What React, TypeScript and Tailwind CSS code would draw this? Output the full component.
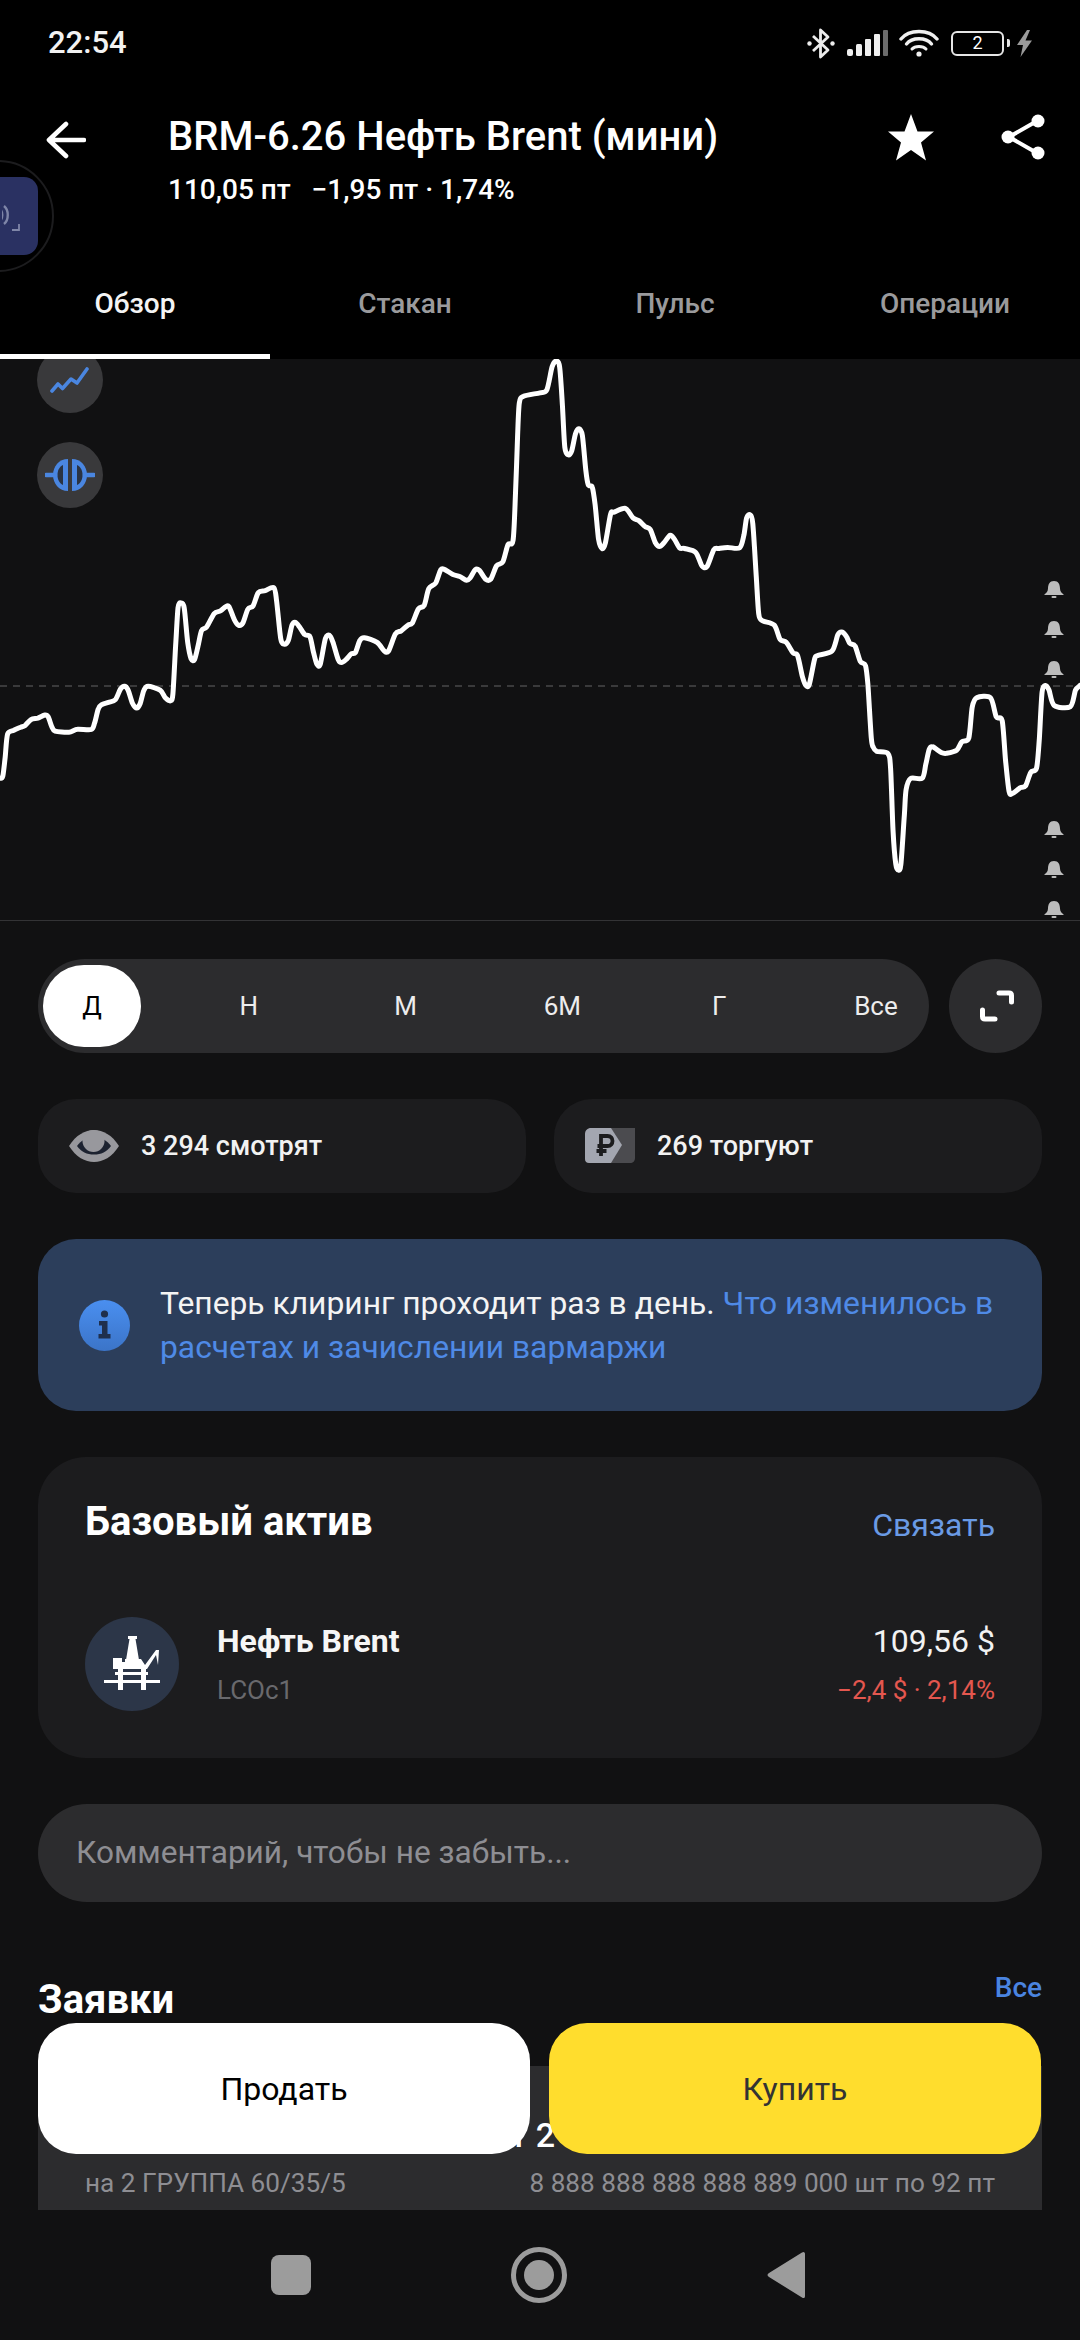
import React from "react";

const LEFT = [[0,1145],[8,1140],[15,1090],[22,1030],[40,1020],[60,1012],[72,1008],[90,992],[110,988],[130,980],[140,985],[150,1010],[160,1022],[200,1025],[225,1017],[265,1018],[275,1000],[285,965],[295,953],[315,947],[335,940],[350,912],[362,905],[372,915],[385,950],[397,962],[407,950],[418,915],[430,905],[465,915],[480,935],[495,943],[502,925],[510,800],[517,700],[526,687],[535,700],[545,790],[555,833],[565,835],[575,800],[585,760],[600,750],[622,715],[640,708],[655,697],[665,697],[680,730],[692,745],[705,740],[720,703],[735,695],[750,660],[770,655],[795,647],[803,680],[815,780],[825,795],[837,785],[848,745],[858,738],[870,750],[885,770],[900,775],[910,815],[920,847],[930,847],[945,780],[957,772],[967,790],[982,835],[992,843],[1005,835],[1020,820],[1032,817],[1045,785],[1058,778],[1095,790],[1115,812],[1128,813],[1148,768],[1165,760],[1185,745],[1197,740],[1215,703],[1232,693],[1245,650],[1265,635],[1280,600],[1292,600],[1315,613],[1335,618],[1355,628],[1365,622],[1380,600],[1392,602],[1410,625],[1425,625],[1442,590],[1460,580],[1475,535],[1490,523],[1497,400],[1503,250],[1508,165],[1520,147]];
const RIGHT = [[0,138],[20,130],[35,70],[47,55],[57,70],[65,170],[72,280],[82,300],[92,290],[103,245],[113,232],[123,250],[133,340],[140,378],[152,385],[160,430],[170,520],[180,545],[190,530],[205,455],[215,450],[248,440],[270,465],[287,472],[305,487],[320,495],[335,530],[347,540],[360,530],[378,510],[390,520],[405,543],[420,545],[452,555],[470,590],[485,592],[505,548],[520,545],[545,542],[580,543],[592,510],[600,465],[610,457],[618,480],[628,620],[635,715],[645,733],[680,745],[697,782],[715,790],[735,818],[748,825],[762,880],[772,903],[782,900],[797,835],[805,825],[848,813],[865,770],[877,763],[890,775],[900,793],[915,800],[930,840],[945,850],[952,900],[962,1040],[968,1065],[978,1075],[1010,1080],[1018,1120],[1025,1280],[1033,1370],[1040,1385],[1048,1370],[1058,1240],[1063,1175],[1076,1146],[1110,1145],[1120,1110],[1130,1070],[1140,1063],[1165,1078],[1180,1080],[1210,1072],[1225,1050],[1245,1040],[1255,960],[1268,935],[1308,935],[1325,985],[1342,995],[1352,1100],[1362,1180],[1372,1185],[1395,1170],[1410,1165],[1425,1130],[1442,1118],[1450,1040],[1458,920],[1468,903],[1478,915],[1493,955],[1540,958],[1555,915],[1568,903]];

function chartPath() {
  const pts = [
    ...LEFT.map(([x, y]) => [(x * 540) / 1568, 340 + (y * 600) / 1568]),
    ...RIGHT.map(([x, y]) => [540 + (x * 540) / 1568, 340 + (y * 600) / 1568]),
  ];
  let d = `M${pts[0][0].toFixed(1)} ${pts[0][1].toFixed(1)}`;
  const t = 0.14;
  for (let i = 0; i < pts.length - 1; i++) {
    const p0 = pts[Math.max(0, i - 1)];
    const p1 = pts[i];
    const p2 = pts[i + 1];
    const p3 = pts[Math.min(pts.length - 1, i + 2)];
    d += ` C${(p1[0] + (p2[0] - p0[0]) * t).toFixed(1)} ${(p1[1] + (p2[1] - p0[1]) * t).toFixed(1)} ${(p2[0] - (p3[0] - p1[0]) * t).toFixed(1)} ${(p2[1] - (p3[1] - p1[1]) * t).toFixed(1)} ${p2[0].toFixed(1)} ${p2[1].toFixed(1)}`;
  }
  return d;
}

const BELLS = [581, 621, 661, 821, 861, 901];

function Chart() {
  return (
    <div className="relative h-[562px] overflow-hidden border-b border-[#333335] bg-[#111112]">
      <svg className="absolute left-0 top-0" width="1080" height="561" viewBox="0 359 1080 561">
        <line x1="0" y1="686" x2="1080" y2="686" stroke="#48484a" strokeWidth="1.5" strokeDasharray="7 6" />
        <path d={chartPath()} fill="none" stroke="#ffffff" strokeWidth="5" strokeLinejoin="round" strokeLinecap="round" />
        {BELLS.map((y) => (
          <g key={y} transform={`translate(1044.5 ${y})`} fill="#bdbdbd">
            <path d="M9.5 0C5 0 3.6 3.5 3.5 7.5C3.4 10.5 2 12 0 13.3V14H19V13.3C17 12 15.6 10.5 15.5 7.5C15.4 3.5 14 0 9.5 0Z" />
            <rect x="7" y="15" width="5" height="2" rx="1" />
          </g>
        ))}
      </svg>
      <div className="absolute left-[37px] top-[-12px] flex h-[66px] w-[66px] items-center justify-center rounded-full bg-[#39393b]">
        <svg width="40" height="28" viewBox="0 0 40 28" fill="none" stroke="#4a86e0" strokeWidth="3.6" strokeLinecap="round" strokeLinejoin="round">
          <path d="M2 25L8 18L12.5 22.5L21 13L27 17L37 3" />
        </svg>
      </div>
      <div className="absolute left-[37px] top-[83px] flex h-[66px] w-[66px] items-center justify-center rounded-full bg-[#39393b]">
        <svg width="50" height="34" viewBox="0 0 50 34">
          <path d="M23 1V33C14 33 8 25.500 8 17C8 8.500 14 1 23 1Z" fill="#4a86e0" />
          <path d="M27 1V33C36 33 42 25.500 42 17C42 8.500 36 1 27 1Z" fill="#4a86e0" />
          <path d="M18 7V27C14 25 12.500 21 12.500 17C12.500 13 14 9 18 7Z" fill="#2a3342" />
          <path d="M32 7V27C36 25 37.500 21 37.500 17C37.500 13 36 9 32 7Z" fill="#2a3342" />
          <path d="M1 17H10M40 17H49" stroke="#4a86e0" strokeWidth="4.5" strokeLinecap="round" />
        </svg>
      </div>
    </div>
  );
}

function StatusIcons() {
  return (
    <div className="flex items-center text-white">
      <svg className="mr-[11px]" width="30" height="33" viewBox="0 0 30 33" fill="none" stroke="#ececec" strokeWidth="2.8">
        <path d="M7 9L22 23L14.5 30V3L22 10L7 24" strokeLinejoin="round" />
        <circle cx="3.5" cy="16.5" r="2.2" fill="#ececec" stroke="none" />
        <circle cx="26.5" cy="16.5" r="2.2" fill="#ececec" stroke="none" />
      </svg>
      <svg className="mr-[10px]" width="42" height="26" viewBox="0 0 42 26">
        <rect x="0" y="19" width="6" height="7" rx="2" fill="#efefef" />
        <rect x="9" y="14" width="6" height="12" rx="1.5" fill="#efefef" />
        <rect x="18" y="9" width="6" height="17" rx="1" fill="#efefef" />
        <rect x="27" y="4" width="6" height="22" rx="1" fill="#efefef" />
        <rect x="36" y="0" width="5" height="26" rx="1" fill="#6b6b6b" />
      </svg>
      <svg className="mr-[12px]" width="40" height="28" viewBox="0 0 40 28" fill="none" stroke="#f0f0f0" strokeWidth="3.4" strokeLinecap="round">
        <path d="M2 10C10 0 30 0 38 10" />
        <path d="M7.5 15C13 8 27 8 32.5 15" />
        <path d="M13 20C16 16.5 24 16.5 27 20" strokeWidth="3" />
        <circle cx="20" cy="25" r="2.6" fill="#f0f0f0" stroke="none" />
      </svg>
      <div className="flex h-[25px] w-[53px] items-center justify-center rounded-[6px] border-[2px] border-[#e6e6e6] text-[18px] leading-none">2</div>
      <div className="ml-[3px] mr-[7px] h-[8px] w-[3px] rounded-r-[2px] bg-[#e6e6e6]" />
      <svg width="15" height="27" viewBox="0 0 15 27">
        <path d="M10 0L0 15H6L3.5 27L15 10.5H8.5L13 0Z" fill="#9a9a9a" />
      </svg>
    </div>
  );
}

function Header() {
  return (
    <div className="relative bg-black text-white">
      <div className="flex h-[86px] items-center justify-between pl-[48px] pr-[48px]">
        <span className="text-[31px] font-medium text-[#f2f2f2]">22:54</span>
        <StatusIcons />
      </div>
      <div className="flex h-[168px] pt-[26px]">
        <div className="w-[168px] shrink-0 pl-[46px] pt-[9px]">
          <svg width="40" height="38" viewBox="0 0 40 38" fill="none" stroke="#fff" strokeWidth="4.6" strokeLinecap="round" strokeLinejoin="round">
            <path d="M20 3L3 19L20 35M3 19H38" />
          </svg>
        </div>
        <div className="flex-1">
          <div className="text-[40px] font-medium leading-[50px]">BRM-6.26 Нефть Brent (мини)</div>
          <div className="mt-[13px] whitespace-pre text-[28px] font-medium leading-[30px]">110,05 пт   −1,95 пт · 1,74%</div>
        </div>
        <div className="flex items-start pr-[35px] pt-[2px]">
          <svg className="mr-[67px]" width="46" height="47" viewBox="0 0 46 47">
            <path d="M23 0L29.5 17.5H46L33 28.5L38 46.5L23 36L8 46.5L13 28.5L0 17.5H16.5Z" fill="#fff" />
          </svg>
          <svg width="44" height="46" viewBox="0 0 44 46" fill="#fff" stroke="#fff" strokeWidth="4">
            <path d="M36 7L8 23L36 39" fill="none" />
            <circle cx="37" cy="7" r="6.5" stroke="none" />
            <circle cx="7" cy="23" r="6.5" stroke="none" />
            <circle cx="37" cy="39" r="6.5" stroke="none" />
          </svg>
        </div>
      </div>
      <div className="grid h-[105px] grid-cols-4 text-[28px] font-medium">
        {["Обзор", "Стакан", "Пульс", "Операции"].map((t, i) => (
          <div
            key={t}
            className={
              i === 0
                ? "flex items-center justify-center border-b-[5px] border-white text-[#f4f4f4]"
                : "flex items-center justify-center border-b-[5px] border-black text-[#9a9a9c]"
            }
          >
            {t}
          </div>
        ))}
      </div>
      <div className="absolute left-[-58px] top-[160px] h-[112px] w-[112px] rounded-full border-[2px] border-[#1c1c1e]" />
      <div className="absolute left-[-20px] top-[177px] flex h-[78px] w-[58px] items-center justify-end rounded-[14px] bg-[#2a3162] pr-[16px]">
        <svg width="20" height="40" viewBox="0 0 20 40" fill="none" stroke="#7f86a8" strokeWidth="2.4">
          <path d="M2 10C7 14 7 24 2 28" />
          <path d="M-2 13C1 16 1 22 -2 25" />
          <path d="M10 34H17V28" strokeWidth="1.8" />
        </svg>
      </div>
    </div>
  );
}

function Periods() {
  return (
    <div className="flex h-[94px] gap-[20px]">
      <div className="flex flex-1 items-center justify-between rounded-[47px] bg-[#2c2c2e] pl-[5px] pr-[4px] text-[26px] text-[#ededed]">
        {["Д", "Н", "М", "6М", "Г", "Все"].map((t, i) => (
          <div
            key={t}
            className={
              i === 0
                ? "flex h-[82px] w-[98px] items-center justify-center rounded-[41px] bg-white text-black"
                : "flex h-[82px] w-[98px] items-center justify-center"
            }
          >
            {t}
          </div>
        ))}
      </div>
      <div className="flex h-[94px] w-[93px] items-center justify-center rounded-full bg-[#2c2c2e]">
        <svg className="ml-[2px]" width="36" height="34" viewBox="0 0 36 34" fill="none" stroke="#fff" strokeWidth="5" strokeLinecap="round" strokeLinejoin="round">
          <path d="M20 4H30C31.500 4 32.500 5 32.500 6.500V13" />
          <path d="M3.500 21V27.500C3.500 29 4.500 30 6 30H16" />
        </svg>
      </div>
    </div>
  );
}

function Stats() {
  return (
    <div className="mt-[46px] grid h-[94px] grid-cols-2 gap-[28px] text-[27px] font-medium text-[#f2f2f2]">
      <div className="flex items-center rounded-[38px] bg-[#1c1c1e] pl-[30px]">
        <svg className="mr-[21px]" width="52" height="34" viewBox="0 0 52 34">
          <path d="M1 17C8 6 17 1 26 1C35 1 44 6 51 17C44 28 35 33 26 33C17 33 8 28 1 17Z" fill="#98989d" />
          <path d="M9 17C13 11 19 8.500 26 8.500C33 8.500 39 11 43 17C39 23 33 25.500 26 25.500C19 25.500 13 23 9 17Z" fill="#1c2230" />
          <circle cx="25.500" cy="12" r="11" fill="#98989d" />
        </svg>
        <span>3 294 смотрят</span>
      </div>
      <div className="flex items-center rounded-[38px] bg-[#1c1c1e] pl-[31px]">
        <svg className="mr-[22px]" width="50" height="36" viewBox="0 0 50 36">
          <path d="M10 0H50V30C50 33 48 35 45 35H8Z" fill="#4b4b4f" />
          <path d="M6 0H26L37 17L26 35H4C1.500 35 0 33.500 0 31V6C0 2.500 2.500 0 6 0Z" fill="#a3a6b0" />
          <path d="M16 28V8H22.500C26 8 27.500 10.500 27.500 13C27.500 15.500 26 18 22.500 18H12.500M11.500 23H21.500" fill="none" stroke="#1c1c1e" strokeWidth="3.800" />
        </svg>
        <span>269 торгуют</span>
      </div>
    </div>
  );
}

function Banner() {
  return (
    <div className="mt-[46px] flex h-[172px] items-center rounded-[38px] bg-[#2c3e5b] pl-[41px]">
      <svg className="mr-[30px] shrink-0" width="51" height="51" viewBox="0 0 51 51">
        <defs>
          <linearGradient id="infoGrad" x1="0" y1="0" x2="0" y2="1">
            <stop offset="0" stopColor="#4a8ff0" />
            <stop offset="1" stopColor="#3b74c8" />
          </linearGradient>
        </defs>
        <circle cx="25.500" cy="25.500" r="25.500" fill="url(#infoGrad)" />
        <circle cx="25.500" cy="14" r="3.600" fill="#1f2f4c" />
        <path d="M20 21H28.500V34H31.500V38.500H19.500V34H23V25.500H20Z" fill="#1f2f4c" />
      </svg>
      <div className="text-[31.8px] leading-[44px] text-[#f4f4f4]">
        Теперь клиринг проходит раз в день. <span className="text-[#4f8ae6]">Что изменилось в расчетах и зачислении вармаржи</span>
      </div>
    </div>
  );
}

function Asset() {
  return (
    <div className="mt-[46px] h-[301px] rounded-[48px] bg-[#1c1c1e] px-[47px] pt-[43px]">
      <div className="flex h-[44px] items-start justify-between">
        <span className="text-[40px] font-bold leading-[44px] text-white">Базовый актив</span>
        <span className="mt-[5px] text-[32px] leading-[40px] text-[#6a9ae4]">Связать</span>
      </div>
      <div className="mt-[73px] flex items-center">
        <div className="flex h-[94px] w-[94px] shrink-0 items-center justify-center rounded-full bg-[#2c3648]">
          <svg width="94" height="94" viewBox="0 0 94 94" fill="#fff">
            <path d="M43 19H52V22H50.500L54 43H41L44.500 22H43Z" />
            <path d="M28 41H37V45H40V42H56L60 48L71 33L74 33L73 48L71 38L62 52H28Z" />
            <rect x="30" y="55" width="33" height="3" />
            <rect x="33" y="52" width="5" height="21" />
            <rect x="56" y="52" width="5" height="21" />
            <rect x="19" y="63" width="56" height="3" />
          </svg>
        </div>
        <div className="ml-[38px] flex-1">
          <div className="text-[32px] font-bold leading-[40px] text-[#f6f6f6]">Нефть Brent</div>
          <div className="mt-[12px] text-[26px] leading-[34px] text-[#69696d]">LCOc1</div>
        </div>
        <div className="text-right">
          <div className="text-[32px] leading-[40px] text-[#f2f2f2]">109,56 $</div>
          <div className="mt-[12px] text-[26px] leading-[34px] text-[#e4574f]">−2,4 $ · 2,14%</div>
        </div>
      </div>
    </div>
  );
}

function Orders() {
  return (
    <>
      <div className="mt-[68px] flex h-[96px] items-start justify-between">
        <span className="mt-[8px] text-[40px] font-bold leading-[44px] text-white">Заявки</span>
        <span className="text-[28px] font-medium leading-[36px] text-[#4a84e0]">Все</span>
      </div>
      <div className="h-[144px] bg-[#2c2c2e] pt-[49px]">
        <div className="w-[517px] text-right text-[34px] font-medium leading-[40px] text-white">1 2</div>
        <div className="mt-[13px] flex justify-between px-[47px] text-[26.2px] leading-[30px] text-[#8e8e93]">
          <span>на 2 ГРУППА 60/35/5</span>
          <span>8 888 888 888 888 889 000 шт по 92 пт</span>
        </div>
      </div>
    </>
  );
}

function NavBar() {
  return (
    <div className="relative h-[130px] bg-[#111112]">
      <div className="absolute left-[271px] top-[45px] h-[40px] w-[40px] rounded-[8px] bg-[#9c9c9c]" />
      <div className="absolute left-[511px] top-[37px] flex h-[56px] w-[56px] items-center justify-center rounded-full border-[5px] border-[#9c9c9c]">
        <div className="h-[30px] w-[30px] rounded-full bg-[#9c9c9c]" />
      </div>
      <svg className="absolute left-[766px] top-[41px]" width="40" height="48" viewBox="0 0 40 48">
        <path d="M36 1.500C38 0 39 1.500 39 3V45C39 46.500 38 48 36 46.500L3 26C1 24.800 1 23.200 3 22Z" fill="#9c9c9c" />
      </svg>
    </div>
  );
}

export default function App() {
  return (
    <div className="relative h-[2340px] w-[1080px] overflow-hidden bg-[#111112] font-['Roboto','Noto_Sans',sans-serif]">
      <Header />
      <Chart />
      <div className="px-[38px] pt-[38px]">
        <Periods />
        <Stats />
        <Banner />
        <Asset />
        <div className="mt-[46px] flex h-[98px] items-center rounded-[49px] bg-[#2c2c2e] pl-[38px] text-[31.6px] text-[#8e8e93]">
          Комментарий, чтобы не забыть...
        </div>
        <Orders />
      </div>
      <NavBar />
      <div className="absolute bottom-[186px] left-[38px] right-[39px] flex h-[131px] gap-[19px] text-[32px]">
        <div className="flex flex-1 items-center justify-center rounded-[38px] bg-white text-black">Продать</div>
        <div className="flex flex-1 items-center justify-center rounded-[38px] bg-[#ffdd2d] text-[#333333]">Купить</div>
      </div>
    </div>
  );
}
